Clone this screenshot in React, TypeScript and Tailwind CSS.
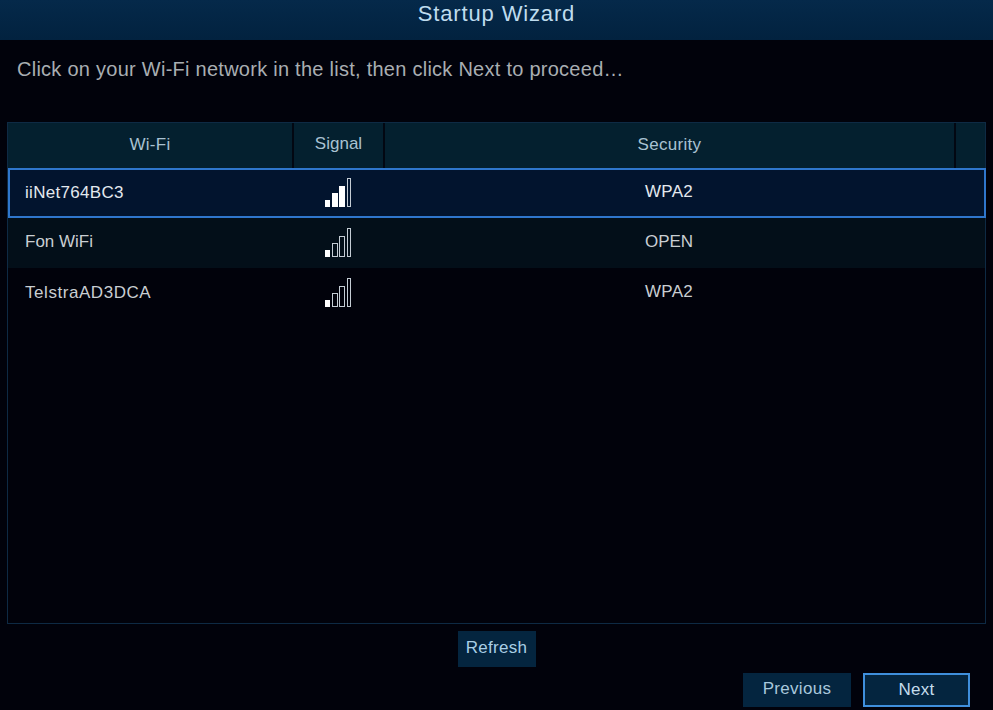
import React from 'react';

const font = "font-['Liberation_Sans',Arial,sans-serif]";

// Signal strength bars, the filled count differs per network
const SignalIcon = ({ level }: { level: number }) => {
  const bars = [
    { x: 0.5, y: 22.5, w: 4, h: 6 },
    { x: 7.5, y: 15.5, w: 5, h: 13 },
    { x: 14.5, y: 8.5, w: 5, h: 20 },
    { x: 22.5, y: 0.5, w: 3, h: 28 },
  ];
  return (
    <svg width="27" height="29" viewBox="0 0 27 29">
      {bars.map((b, i) => (
        <rect
          key={i}
          x={b.x}
          y={b.y}
          width={b.w}
          height={b.h}
          fill={i < level ? '#ffffff' : 'none'}
          stroke={i < level ? '#ffffff' : '#c4ccd4'}
          strokeWidth="1"
        />
      ))}
    </svg>
  );
};

const rows = [
  { name: 'iiNet764BC3', level: 3, security: 'WPA2', track: 'tracking-[0.3px]', secTrack: 'tracking-[0.3px]' },
  { name: 'Fon WiFi', level: 1, security: 'OPEN', track: 'tracking-[0px]', secTrack: 'tracking-[-0.1px]' },
  { name: 'TelstraAD3DCA', level: 1, security: 'WPA2', track: 'tracking-[0.55px]', secTrack: 'tracking-[0.3px]' },
];

const App = () => {
  return (
    <div className={`${font} w-[993px] h-[710px] overflow-hidden bg-[#01020b] flex flex-col`}>
      {/* Title bar */}
      <div className="h-10 shrink-0 bg-gradient-to-b from-[#05294a] to-[#02223f] flex justify-center">
        <h1 className="text-[22px] leading-[27px] tracking-[0.85px] font-normal text-[#bfdcee]">Startup Wizard</h1>
      </div>

      <p className="ml-[17px] mt-[16px] h-[26px] text-[20px] leading-[26px] tracking-[0.26px] text-[#a9aeb2]">
        Click on your Wi-Fi network in the list, then click Next to proceed…
      </p>

      {/* Network table */}
      <div className="ml-[7px] mt-[40px] w-[979px] h-[502px] shrink-0 border border-[#0e2a44]">
        <div className="h-[45px] bg-[#04202f] flex text-[17px] tracking-[0.3px] text-[#a9c2d2]">
          <div className="w-[286px] flex items-center justify-center pb-[2px] border-r-[2px] border-[#020712]">Wi-Fi</div>
          <div className="w-[91px] flex items-center justify-center pb-[4px] tracking-[0px] border-r-[2px] border-[#020712]">Signal</div>
          <div className="w-[571px] flex items-center justify-center pb-[2px] border-r-[2px] border-[#020712]">Security</div>
          <div className="flex-1" />
        </div>
        {rows.map((row, i) => (
          <div
            key={row.name}
            className={
              i === 0
                ? 'h-[50px] w-[978px] flex items-center bg-[#02142e] border-[2px] border-[#2f76cc] text-[#e4e9ee] text-[17px]'
                : i === 1
                  ? 'h-[50px] flex items-center bg-[#030f19] text-[#c9ced2] text-[17px] border-[2px] border-transparent'
                  : 'h-[50px] flex items-center text-[#c9ced2] text-[17px] border-[2px] border-transparent'
            }
          >
            <div className={`w-[283px] pl-[15px] ${row.track} ${i === 1 ? 'pb-[2px]' : ''}`}>{row.name}</div>
            <div className="w-[90px] flex justify-center pb-[1px] shrink-0"><SignalIcon level={row.level} /></div>
            <div className={`w-[572px] text-center pb-[2px] ${row.secTrack}`}>{row.security}</div>
          </div>
        ))}
      </div>

      {/* Refresh */}
      <div className="flex justify-center mt-[7px]">
        <button className="w-[78px] h-[36px] bg-[#04253f] text-[17px] tracking-[0.3px] text-[#a9cfe6] pb-[3px]">Refresh</button>
      </div>

      {/* Wizard navigation */}
      <div className="flex justify-end gap-[12px] mt-[6px] pr-[23px]">
        <button className="w-[108px] h-[34px] bg-[#04253f] text-[17px] tracking-[0.3px] text-[#a9c8dc] pb-[3px]">Previous</button>
        <button className="w-[107px] h-[34px] bg-[#04253f] border-[2px] border-[#3f8fdc] text-[17px] tracking-[0.3px] text-[#c4dcec]">Next</button>
      </div>
    </div>
  );
};

export default App;
